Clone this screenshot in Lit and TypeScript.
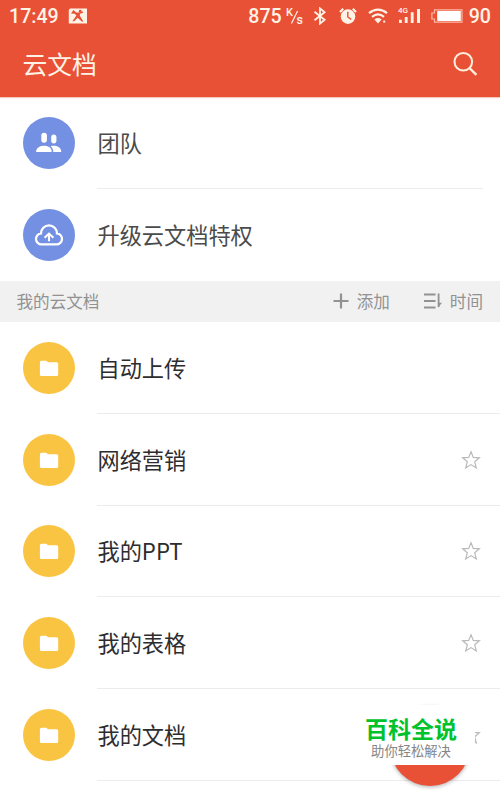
import { LitElement, html, css, svg, nothing } from "lit";
import { customElement, property } from "lit/decorators.js";

const folders = [
  { name: "自动上传", star: false },
  { name: "网络营销", star: true },
  { name: "我的PPT", star: true },
  { name: "我的表格", star: true },
  { name: "我的文档", star: true },
];

const glyphs = {
  team: svg`
    <rect x="18.3" y="15.8" width="5.6" height="10" rx="2.8"/>
    <rect x="28.2" y="17.6" width="5.2" height="8.8" rx="2.6"/>
    <path d="M13.2 35V33.4C14 30.5 16.9 28.8 20.9 28.8S27.9 30.5 28.6 33.4V35Z"/>
    <path d="M27.6 29.2C32.8 28 37.3 29.9 38.2 33.6V35H30.2V33.4C29.8 31.6 28.8 30.2 27.6 29.2Z"/>`,
  cloud: svg`
    <path d="M19 35.4H33A5.5 5.5 0 0 0 34 24.4A8 8 0 0 0 18 24.4A5.5 5.5 0 0 0 19 35.4Z"
      fill="none" stroke="#fff" stroke-width="2.3"/>
    <path d="M26 32.2V25M21.6 28.8L26 24.6L30.4 28.8" fill="none" stroke="#fff" stroke-width="2.1"/>`,
  folder: svg`
    <path d="M18.6 18.8H22.8Q23.8 18.8 24.3 19.6L24.8 20.3H33.6Q35.2 20.3 35.2 21.9V32.4Q35.2 34 33.6 34H18.6Q16.9 34 16.9 32.4V20.4Q16.9 18.8 18.6 18.8Z"/>`,
};

@customElement("doc-row")
class DocRow extends LitElement {
  @property() label = "";
  @property() icon: keyof typeof glyphs = "folder";
  @property({ type: Boolean }) star = false;

  static styles = css`
    :host { display: flex; height: 91.75px; box-sizing: border-box; padding-left: 22.5px; align-items: center; }
    .disc { width: 52px; height: 52px; border-radius: 50%; flex: none; background: #fac443; fill: #fff; }
    .disc.blue { background: #7390e2; }
    .body {
      flex: 1; align-self: stretch; margin-left: 22.5px; display: flex; align-items: center;
      justify-content: space-between; box-sizing: border-box; border-bottom: 1px solid #ececec;
      padding: 1px 19px 0 0; font-size: 22.2px; line-height: 32px; color: #2d2d2f;
    }
    .body span { margin: -2px 0 0 .5px; }
    .body.blue { color: #4b4b4b; margin-right: 17px; }
    .body.last { border-color: transparent; }
    .star { width: 20px; height: 20px; fill: none; stroke: #b9b9b9; stroke-width: 1.2; }
  `;

  render() {
    const blue = this.icon === "folder" ? "" : "blue";
    const last = this.icon === "cloud" ? "last" : "";
    return html`
      <svg class="disc ${blue}" viewBox="0 0 52 52">${glyphs[this.icon]}</svg>
      <div class="body ${blue} ${last}">
        <span>${this.label}</span>
        ${this.star
          ? html`<svg class="star" viewBox="0 0 20 20"><path d="M10 1.8L12.3 7.4L18.4 7.8L13.7 11.8L15.3 18L10 14.6L4.7 18L6.3 11.8L1.6 7.8L7.7 7.4Z"/></svg>`
          : nothing}
      </div>`;
  }
}

@customElement("app-root")
class AppRoot extends LitElement {
  static styles = css`
    :host {
      display: block; position: relative; width: 500px; height: 790px; overflow: hidden; background: #fff;
      font-family: "Noto Sans CJK SC", sans-serif;
    }
    header { height: 97px; background: #e95136; color: #fff3e6; box-shadow: 0 1px 1px #f3c9bb; position: relative; }
    .status {
      height: 32px; padding: 1px 9px 0 9px; display: flex; align-items: center; box-sizing: border-box;
      font: 500 19.6px/31px Roboto, sans-serif;
    }
    .status svg { flex: none; display: block; fill: #fff3e6; }
    .photo { margin-left: 9px; margin-top: -2px; }
    .speed { margin-left: auto; }
    .kbps { margin-left: 1px; }
    .bt { margin-left: 8px; margin-top: -2px; }
    .alarm { margin-left: 11px; margin-top: -2px; }
    .wifi { margin-left: 10px; margin-top: -1px; }
    .signal { margin-left: 10px; margin-top: -3px; }
    .battery { margin-left: 9px; margin-top: -1px; }
    .percent { margin-left: 6px; }
    .unit { font: 500 11px Roboto, sans-serif; }
    .unit.low { font-size: 12.5px; }
    .net { font: 500 8px Roboto, sans-serif; }
    .title { height: 65px; display: flex; align-items: center; justify-content: space-between; padding: 0 22px; font-size: 24.8px; }
    .title span { margin-top: -3px; margin-left: .5px; }
    .title svg { fill: none; stroke: #fff0dc; stroke-width: 2; margin-top: -1px; }
    .top { height: 184px; }
    .section {
      height: 41px; background: #f1f1f1; color: #929292; display: flex; align-items: center;
      padding: 0 17px 1px 16.5px; font-size: 16.6px; line-height: 24px; box-sizing: border-box;
    }
    .section svg { stroke: #929292; fill: none; }
    .add { margin-left: auto; display: flex; align-items: center; gap: 8px; }
    .sort { margin-left: 33px; display: flex; align-items: center; gap: 7px; }
    .fab {
      position: absolute; left: 390px; top: 706px; width: 80px; height: 80px; border-radius: 50%;
      background: #e95136; box-shadow: 0 1px 4px #0005;
    }
    .badge {
      position: absolute; left: 347px; top: 705px; width: 128px; height: 60px; background: #fff;
      display: flex; flex-direction: column; align-items: center; box-sizing: border-box; padding-top: 8px;
    }
    .brand { color: #00c22d; font-size: 23px; font-weight: 700; line-height: 30px; }
    .motto { color: #858585; font-size: 13.3px; line-height: 16px; }
  `;

  render() {
    return html`
      <header>
        <div class="status">
          <span>17:49</span>
          <svg class="photo" width="20" height="16" viewBox="0 0 20 16">
            <path fill-rule="evenodd" d="M2 .5H19V15.5H.8V2ZM5.4 2L3 5.6L6.8 5.8L8.4 7.4L4.4 13.2H6.2L9.6 9.7L13.8 13.6H15.4L11.8 7.8L12 5.8L15.2 4.8L14.8 3.4L11 4.6H8.2Z"/>
            <circle cx="12.2" cy="3.2" r="1.4" fill="#e95136"/>
          </svg>
          <span class="speed">875</span>
          <svg class="kbps" width="22" height="20" viewBox="0 0 22 20">
            <text class="unit" x="3" y="9.4">K</text><text class="unit low" x="13.4" y="17">s</text>
            <path d="M14.6 4L8.4 16.5" stroke="#fff3e6" stroke-width="1.2"/>
          </svg>
          <svg class="bt" width="14" height="18" viewBox="0 0 14 18">
            <path d="M1.5 4.8L11.6 12.8L7 16.6V1.4L11.6 5.2L1.5 13.2" fill="none" stroke="#fff3e6" stroke-width="1.8"/>
          </svg>
          <svg class="alarm" width="20" height="18" viewBox="0 0 20 18">
            <circle cx="10" cy="9.6" r="7.3"/>
            <path d="M2 5L5.2 1.7M18 5L14.8 1.7" stroke="#fff3e6" stroke-width="2.1"/>
            <path d="M9.8 4.8V10L13.2 12.4" fill="none" stroke="#e95136" stroke-width="1.4"/>
          </svg>
          <svg class="wifi" width="20" height="18" viewBox="0 0 20 18">
            <g fill="none" stroke="#fff3e6" stroke-width="2.2"><path d="M1 6.2Q10 -.8 19 6.2"/><path d="M4 9.9Q10 5 16 9.9"/></g>
            <path d="M6.4 12.4Q10 9.8 13.6 12.4L10 16.4Z"/><rect x="15.2" y="13.6" width="2" height="2"/>
          </svg>
          <svg class="signal" width="24" height="18" viewBox="0 0 24 18">
            <text class="net" x="0" y="7.2">4G</text>
            <path d="M1 13.8H3.8V17H1ZM6.8 11H9.6V17H6.8ZM12.8 6.2H15.6V17H12.8ZM19 3H22V17H19Z"/>
          </svg>
          <svg class="battery" width="32" height="14" viewBox="0 0 32 14">
            <path d="M3.5 .8H31V13.2H3.5V10H.9V4H3.5Z" fill="none" stroke="#ffb9a2" stroke-width="1.2"/>
            <rect x="6.2" y="2" width="23.6" height="10" fill="#fff"/>
          </svg>
          <span class="percent">90</span>
        </div>
        <div class="title">
          <span>云文档</span>
          <svg width="26" height="26" viewBox="0 0 26 26"><circle cx="11.3" cy="10.8" r="8.8"/><path d="M17.4 17L24.4 23.8" stroke-width="2.4"/></svg>
        </div>
      </header>
      <div class="top">
        <doc-row icon="team" label="团队"></doc-row>
        <doc-row icon="cloud" label="升级云文档特权"></doc-row>
      </div>
      <div class="section">
        <span>我的云文档</span>
        <span class="add">
          <svg width="16" height="16" viewBox="0 0 16 16"><path d="M.5 8H15.5M8 .5V15.5" stroke-width="2.2"/></svg>添加
        </span>
        <span class="sort">
          <svg width="20" height="16" viewBox="0 0 20 16"><path d="M1 1.5H12.5M1 8H12.5M1 14.5H12.5M15.6 .5V14" stroke-width="1.8"/><path d="M15.5 9.8H19L15 14.8Z" fill="#929292" stroke="none"/></svg>时间
        </span>
      </div>
      ${folders.map((f) => html`<doc-row label=${f.name} ?star=${f.star}></doc-row>`)}
      <div class="fab"></div>
      <div class="badge"><span class="brand">百科全说</span><span class="motto">助你轻松解决</span></div>
    `;
  }
}
